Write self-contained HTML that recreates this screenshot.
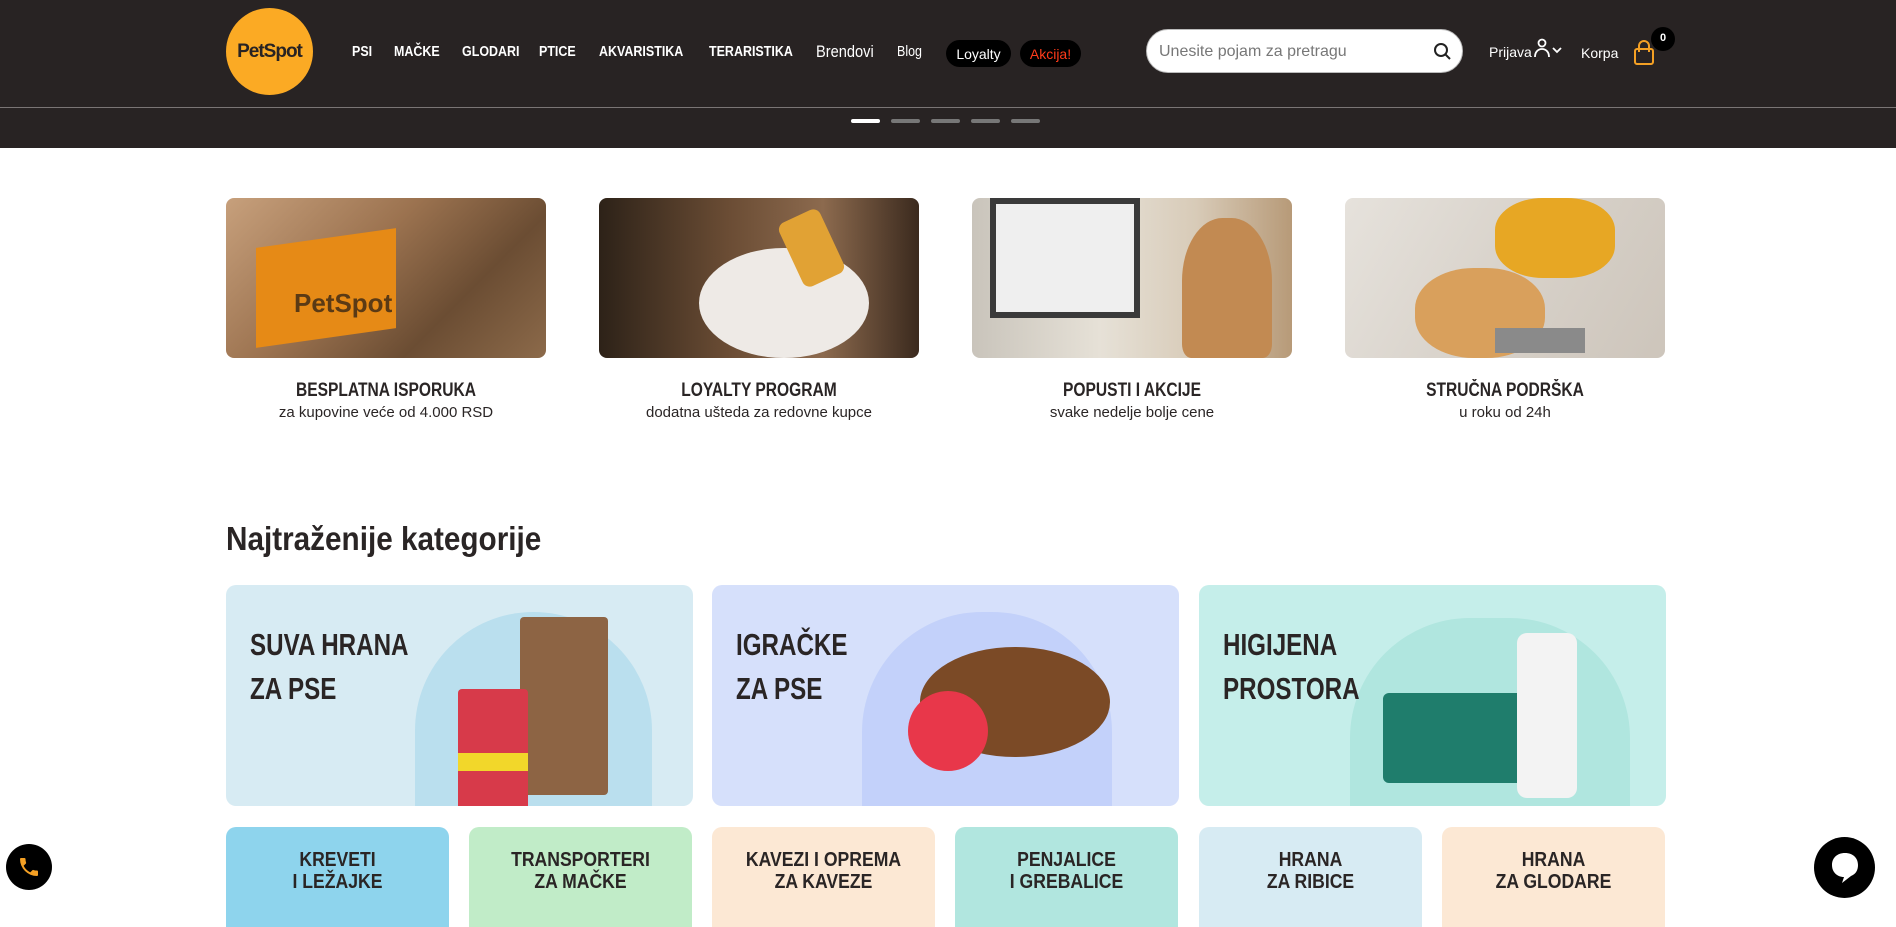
<!DOCTYPE html>
<html><head><meta charset="utf-8"><style>
*{margin:0;padding:0;box-sizing:border-box}
body{width:1896px;height:917px;overflow:hidden;background:#fff;font-family:"Liberation Sans",sans-serif;position:relative;color:#2a2525}
.hdr{position:absolute;left:0;top:0;width:1896px;height:148px;background:#282323}
.hline{position:absolute;left:0;top:107px;width:1896px;height:1px;background:#7a7575}
.logo{position:absolute;left:226px;top:8px;width:87px;height:87px;border-radius:50%;background:#fbaa24;color:#282323;font-weight:bold;font-size:19px;letter-spacing:-1px;display:flex;align-items:center;justify-content:center}
.nv{position:absolute;top:44px;color:#fff;font-size:14.5px;font-weight:bold;transform:scaleX(.86);transform-origin:left;white-space:nowrap}
.pill{position:absolute;top:40px;height:27px;border-radius:14px;background:#000;font-size:14px;display:flex;align-items:center;justify-content:center}
.search{position:absolute;left:1146px;top:29px;width:317px;height:44px;border-radius:22px;background:#fff;border:1px solid #bbb}
.search span{position:absolute;left:12px;top:13px;color:#777;font-size:16px}
.dot{position:absolute;top:119px;width:29px;height:4px;border-radius:2px;background:#777}
.fc{position:absolute;top:198px;width:320px;height:160px;border-radius:8px;overflow:hidden}
.ft{position:absolute;top:380px;width:320px;text-align:center;font-weight:bold;font-size:19px;color:#2a2525;transform:scaleX(.82)}
.fs{position:absolute;top:404px;width:320px;text-align:center;font-size:15px;color:#2a2525}
h2{position:absolute;left:226px;top:520px;font-size:33px;font-weight:bold;color:#2a2525;transform:scaleX(.9);transform-origin:left;white-space:nowrap}
.bc{position:absolute;top:585px;height:221px;width:467px;border-radius:10px;overflow:hidden}
.bc .t{position:absolute;left:24px;top:38px;font-weight:bold;font-size:31px;line-height:44px;color:#2a2525;transform:scaleX(.78);transform-origin:left;white-space:nowrap}
.arch{position:absolute;bottom:0;border-radius:120px 120px 0 0}
.sc{position:absolute;top:827px;width:223px;height:100px;border-radius:10px 10px 0 0}
.sc div{text-align:center;padding-top:22px;font-weight:bold;font-size:20px;line-height:22px;color:#2a2525;transform:scaleX(.88)}
</style></head><body>
<div class="hdr"></div>
<div class="hline"></div>
<div class="logo">PetSpot</div>
<span class="nv" style="left:352px">PSI</span>
<span class="nv" style="left:394px">MAČKE</span>
<span class="nv" style="left:462px">GLODARI</span>
<span class="nv" style="left:539px">PTICE</span>
<span class="nv" style="left:599px">AKVARISTIKA</span>
<span class="nv" style="left:709px">TERARISTIKA</span>
<span class="nv" style="left:816px;font-weight:normal;font-size:17px;top:42px">Brendovi</span>
<span class="nv" style="left:897px;font-weight:normal">Blog</span>
<div class="pill" style="left:946px;width:65px;color:#fff">Loyalty</div>
<div class="pill" style="left:1020px;width:61px;color:#ff3b1a">Akcija!</div>
<div class="search"><span>Unesite pojam za pretragu</span>
<svg style="position:absolute;right:10px;top:12px" width="19" height="19" viewBox="0 0 19 19" fill="none" stroke="#222" stroke-width="2"><circle cx="8" cy="8" r="6"/><path d="M12.5 12.5L17 17"/></svg></div>
<div style="position:absolute;left:1489px;top:44px;color:#fff;font-size:14px">Prijava</div>
<svg style="position:absolute;left:1534px;top:38px" width="36" height="22" viewBox="0 0 36 22" fill="none" stroke="#fff" stroke-width="1.8"><circle cx="8" cy="5" r="3.5"/><path d="M1 19c0-5 3-8 7-8s7 3 7 8"/><path d="M19 10l4 4 4-4"/></svg>
<div style="position:absolute;left:1581px;top:45px;color:#fff;font-size:14px">Korpa</div>
<svg style="position:absolute;left:1633px;top:40px" width="22" height="26" viewBox="0 0 22 26" fill="none" stroke="#f4a024" stroke-width="2"><rect x="2" y="9" width="18" height="15" rx="2"/><path d="M6 12V6a5 5 0 0110 0v6"/></svg>
<div style="position:absolute;left:1651px;top:27px;width:24px;height:24px;border-radius:50%;background:#000;color:#fff;font-size:11px;font-weight:bold;text-align:center;line-height:22px">0</div>
<div class="dot" style="left:851px;background:#fff"></div>
<div class="dot" style="left:891px"></div>
<div class="dot" style="left:931px"></div>
<div class="dot" style="left:971px"></div>
<div class="dot" style="left:1011px"></div>

<div class="fc" style="left:226px;background:linear-gradient(135deg,#c7a07c 0%,#9c7350 40%,#6b4d33 70%,#8c6a4a 100%)"><div style="position:absolute;left:30px;top:40px;width:140px;height:100px;background:#e68a16;transform:skewY(-8deg)"></div><div style="position:absolute;left:68px;top:90px;color:#5a3a15;font-weight:bold;font-size:26px">PetSpot</div></div>
<div class="fc" style="left:599px;background:linear-gradient(90deg,#2d2218 0%,#6a4c34 40%,#8c6a4e 70%,#3b2a1e 100%)"><div style="position:absolute;left:100px;top:50px;width:170px;height:110px;border-radius:50%;background:#eeeae6"></div><div style="position:absolute;left:190px;top:15px;width:45px;height:70px;border-radius:8px;background:#e1a234;transform:rotate(-25deg)"></div></div>
<div class="fc" style="left:972px;background:linear-gradient(90deg,#c9c4bb 0%,#e6e1d7 40%,#d8cbb8 70%,#b79a78 100%)"><div style="position:absolute;left:18px;top:0;width:150px;height:120px;background:#efefef;border:6px solid #3a3a3a"></div><div style="position:absolute;left:210px;top:20px;width:90px;height:140px;border-radius:45% 45% 10% 10%;background:#c28a52"></div></div>
<div class="fc" style="left:1345px;background:linear-gradient(120deg,#e6e2dc 0%,#d8d2ca 50%,#cdc5bb 100%)"><div style="position:absolute;left:150px;top:0;width:120px;height:80px;border-radius:40%;background:#e7a724"></div><div style="position:absolute;left:70px;top:70px;width:130px;height:90px;border-radius:45%;background:#d9a05c"></div><div style="position:absolute;left:150px;top:130px;width:90px;height:25px;background:#8a8a8a"></div></div>

<div class="ft" style="left:226px">BESPLATNA ISPORUKA</div><div class="fs" style="left:226px">za kupovine veće od 4.000 RSD</div>
<div class="ft" style="left:599px">LOYALTY PROGRAM</div><div class="fs" style="left:599px">dodatna ušteda za redovne kupce</div>
<div class="ft" style="left:972px">POPUSTI I AKCIJE</div><div class="fs" style="left:972px">svake nedelje bolje cene</div>
<div class="ft" style="left:1345px">STRUČNA PODRŠKA</div><div class="fs" style="left:1345px">u roku od 24h</div>

<h2>Najtraženije kategorije</h2>

<div class="bc" style="left:226px;background:#d7ebf3"><div class="arch" style="left:189px;width:237px;height:194px;background:#badfee"></div>
<div style="position:absolute;left:294px;top:32px;width:88px;height:178px;background:#8d6444;border-radius:4px"></div>
<div style="position:absolute;left:232px;top:104px;width:70px;height:136px;background:#d73a4a;border-radius:4px"></div>
<div style="position:absolute;left:232px;top:168px;width:70px;height:18px;background:#f2d72a"></div>
<div class="t">SUVA HRANA<br>ZA PSE</div></div>
<div class="bc" style="left:712px;background:#d6e0fb"><div class="arch" style="left:150px;width:250px;height:194px;background:#c3d1fa"></div>
<div style="position:absolute;left:208px;top:62px;width:190px;height:110px;border-radius:50%;background:#7b4a26"></div>
<div style="position:absolute;left:196px;top:106px;width:80px;height:80px;border-radius:50%;background:#e8374a"></div>
<div class="t">IGRAČKE<br>ZA PSE</div></div>
<div class="bc" style="left:1199px;background:#c5eeea"><div class="arch" style="left:151px;width:280px;height:188px;background:#b0e6df"></div>
<div style="position:absolute;left:184px;top:108px;width:150px;height:90px;background:#1f7d6c;border-radius:6px"></div>
<div style="position:absolute;left:318px;top:48px;width:60px;height:165px;background:#f3f3f3;border-radius:10px"></div>
<div class="t">HIGIJENA<br>PROSTORA</div></div>

<div class="sc" style="left:226px;background:#8ed4ed"><div>KREVETI<br>I LEŽAJKE</div></div>
<div class="sc" style="left:469px;background:#c1ecc8"><div>TRANSPORTERI<br>ZA MAČKE</div></div>
<div class="sc" style="left:712px;background:#fce8d4"><div>KAVEZI I OPREMA<br>ZA KAVEZE</div></div>
<div class="sc" style="left:955px;background:#b1e6df"><div>PENJALICE<br>I GREBALICE</div></div>
<div class="sc" style="left:1199px;background:#d7ebf3"><div>HRANA<br>ZA RIBICE</div></div>
<div class="sc" style="left:1442px;background:#fce8d4"><div>HRANA<br>ZA GLODARE</div></div>

<div style="position:absolute;left:6px;top:844px;width:46px;height:46px;border-radius:50%;background:#000"></div>
<svg style="position:absolute;left:17px;top:855px" width="24" height="24" viewBox="0 0 24 24"><path fill="#f4a024" d="M6.6 10.8a15 15 0 006.6 6.6l2.2-2.2a1 1 0 011-.25 11 11 0 003.6.6 1 1 0 011 1V20a1 1 0 01-1 1A17 17 0 013 4a1 1 0 011-1h3.5a1 1 0 011 1c0 1.25.2 2.45.6 3.6a1 1 0 01-.25 1z"/></svg>
<div style="position:absolute;left:1814px;top:837px;width:61px;height:61px;border-radius:50%;background:#000"></div>
<svg style="position:absolute;left:1828px;top:850px" width="34" height="36" viewBox="0 0 34 36"><path fill="#fff" d="M17 3C9 3 4 8 4 15s5 12 12 12l-2 6 9-7c5-2 7-6 7-11 0-7-5-12-13-12z"/></svg>
</body></html>
